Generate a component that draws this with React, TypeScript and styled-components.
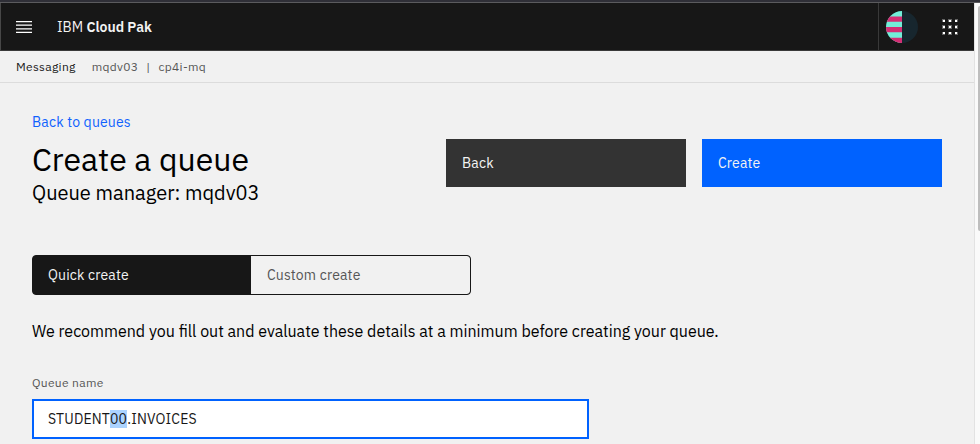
import React from 'react';
import styled, { createGlobalStyle } from 'styled-components';

const GlobalStyle = createGlobalStyle`
  *, *::before, *::after { box-sizing: border-box; }
  body {
    margin: 0;
    overflow: hidden;
    background: #f1f1f1;
    font-family: "IBM Plex Sans", Roboto, "Liberation Sans", sans-serif;
    font-size: 14px;
    line-height: 18px;
    letter-spacing: 0.16px;
    color: #171717;
  }
`;

const Window = styled.div`
  display: flex;
  flex-direction: column;
  width: 980px;
  height: 444px;
  overflow: hidden;
`;

const WindowEdge = styled.div`
  flex: none;
  height: 3px;
  background: #2f2f37;
  border-bottom: 1px solid #5b5b5e;
`;

const Viewport = styled.div`
  display: flex;
  flex: 1;
  min-height: 0;
`;

const Page = styled.div`
  display: flex;
  flex-direction: column;
  width: 974px;
`;

const Header = styled.header`
  display: flex;
  align-items: center;
  flex: none;
  height: 48px;
  background: #171717;
  border-bottom: 1px solid #393939;
  border-left: 1px solid #474747;
`;

const IconButton = styled.button`
  display: flex;
  align-items: center;
  justify-content: center;
  width: 46px;
  height: 47px;
  padding: 0;
  border: 0;
  background: none;
`;

const Brand = styled.span`
  margin-left: 10px;
  padding-top: 1px;
  line-height: 20px;
  letter-spacing: 0;
  color: #f3f3f3;
  strong { font-weight: 600; }
`;

const HeaderActions = styled.div`
  display: flex;
  align-items: center;
  height: 47px;
  margin-left: auto;
  border-left: 1px solid #393939;
  padding: 1px 1px 0 7px;
  gap: 9px;
`;

const Breadcrumb = styled.nav`
  display: flex;
  align-items: center;
  flex: none;
  height: 32px;
  padding-left: 16px;
  border-bottom: 1px solid #dcdcdc;
  font-size: 12px;
  line-height: 16px;
  letter-spacing: 0.32px;
  color: #565656;
`;

const Section = styled.span`
  margin-right: 16px;
  color: #171717;
`;

const Divider = styled.span`
  margin: 0 8px;
`;

const Main = styled.main`
  display: flex;
  flex-direction: column;
  padding: 30px 32px 0;
`;

const TitleRow = styled.div`
  display: flex;
  justify-content: space-between;
  height: 142px;
`;

const BackLink = styled.a`
  display: block;
  color: #0f62fe;
`;

const Title = styled.h1`
  margin: 8px 0 0;
  font-size: 32px;
  font-weight: 400;
  line-height: 40px;
  letter-spacing: 0;
  color: #000;
`;

const Subtitle = styled.h2`
  margin: 1px 0 0;
  font-size: 20px;
  font-weight: 400;
  line-height: 26px;
  letter-spacing: 0;
  color: #000;
`;

const Actions = styled.div`
  display: flex;
  gap: 16px;
  padding-top: 26px;
`;

const ActionButton = styled.button<{ $primary?: boolean }>`
  width: 240px;
  height: 48px;
  padding: 0 16px;
  border: 0;
  background: ${({ $primary }) => ($primary ? '#0062ff' : '#333333')};
  color: #f3f3f3;
  font: inherit;
  letter-spacing: inherit;
  text-align: left;
`;

const Switcher = styled.div`
  display: flex;
  width: 439px;
  height: 40px;
  border: 1px solid #171717;
  border-radius: 4px;
  background: #171717;
  overflow: hidden;
`;

const SwitchTab = styled.button<{ $selected?: boolean }>`
  flex: ${({ $selected }) => ($selected ? '0 0 218px' : '1')};
  padding: 0 ${({ $selected }) => ($selected ? 15 : 16)}px;
  border: 0;
  border-radius: ${({ $selected }) => ($selected ? '0' : '0 3px 3px 0')};
  background: ${({ $selected }) => ($selected ? '#171717' : '#f1f1f1')};
  color: ${({ $selected }) => ($selected ? '#f3f3f3' : '#565656')};
  font: inherit;
  letter-spacing: inherit;
  text-align: left;
`;

const Recommendation = styled.p`
  margin: 24px 0 0;
  font-size: 16px;
  line-height: 24px;
  letter-spacing: 0;
  color: #000;
`;

const FieldLabel = styled.label`
  margin: 32px 0 8px;
  font-size: 12px;
  line-height: 16px;
  letter-spacing: 0.32px;
  color: #565656;
`;

const Field = styled.div`
  display: flex;
  align-items: center;
  width: 557px;
  height: 40px;
  padding: 0 14px;
  border: 2px solid #0062ff;
  background: #fff;
`;

const Selection = styled.mark`
  background: #abd3ff;
  color: inherit;
`;

const ScrollTrack = styled.div`
  flex: 1;
  padding: 3px 0 0 3px;
  border-left: 1px solid #e2e2e2;
  background: #fafafa;
`;

const ScrollThumb = styled.div`
  height: 225px;
  border-radius: 4px 0 0 4px;
  background: #bebebe;
`;

const MenuIcon = () => (
  <svg width="20" height="20" viewBox="0 0 20 20" fill="#fff">
    <path d="M2 14.8h16V16H2zM2 11.2h16v1.2H2zM2 7.6h16v1.2H2zM2 4h16v1.2H2z" />
  </svg>
);

const Avatar = () => (
  <svg width="32" height="32" viewBox="0 0 32 32">
    <defs>
      <clipPath id="avatar-half">
        <path d="M16 0a16 16 0 0 0 0 32z" />
      </clipPath>
    </defs>
    <circle cx="16" cy="16" r="16" fill="#17262e" />
    <g clipPath="url(#avatar-half)">
      <rect width="16" height="32" fill="#72eed8" />
      <path d="M0 5.5h16v5.2H0zM0 16.1h16v5.2H0zM0 26.7h16V32H0z" fill="#d42d73" />
    </g>
  </svg>
);

const GRID = [0, 1, 2];

const SwitcherIcon = () => (
  <svg width="16" height="16" viewBox="0 0 16 16">
    {GRID.map((row) =>
      GRID.map((col) => {
        const x = [0, 6, 13][col];
        const y = [0, 6, 13][row];
        const size = (i: number) => (i === 1 ? 4 : 3);
        return (
          <g key={`${row}-${col}`}>
            <rect x={x} y={y} width={size(col)} height={size(row)} fill="#626262" />
            <rect x={[1, 7, 13][col]} y={[1, 7, 13][row]} width="2" height="2" fill="#fff" />
          </g>
        );
      }),
    )}
  </svg>
);

export default function App() {
  return (
    <Window>
      <GlobalStyle />
      <WindowEdge />
      <Viewport>
        <Page>
          <Header>
            <IconButton aria-label="Menu"><MenuIcon /></IconButton>
            <Brand>IBM <strong>Cloud Pak</strong></Brand>
            <HeaderActions>
              <Avatar />
              <IconButton aria-label="App switcher"><SwitcherIcon /></IconButton>
            </HeaderActions>
          </Header>
          <Breadcrumb>
            <Section>Messaging</Section>
            <span>mqdv03</span>
            <Divider>|</Divider>
            <span>cp4i-mq</span>
          </Breadcrumb>
          <Main>
            <TitleRow>
              <div>
                <BackLink>Back to queues</BackLink>
                <Title>Create a queue</Title>
                <Subtitle>Queue manager: mqdv03</Subtitle>
              </div>
              <Actions>
                <ActionButton>Back</ActionButton>
                <ActionButton $primary>Create</ActionButton>
              </Actions>
            </TitleRow>
            <Switcher>
              <SwitchTab $selected>Quick create</SwitchTab>
              <SwitchTab>Custom create</SwitchTab>
            </Switcher>
            <Recommendation>
              We recommend you fill out and evaluate these details at a minimum before creating your queue.
            </Recommendation>
            <FieldLabel>Queue name</FieldLabel>
            <Field>
              <span>STUDENT<Selection>00</Selection>.INVOICES</span>
            </Field>
          </Main>
        </Page>
        <ScrollTrack>
          <ScrollThumb />
        </ScrollTrack>
      </Viewport>
    </Window>
  );
}
